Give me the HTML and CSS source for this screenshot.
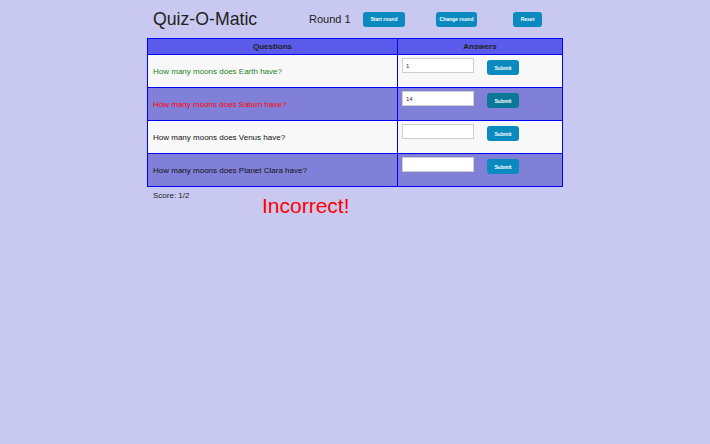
FILE: index.html
```html
<!DOCTYPE html>
<html>
<head>
<meta charset="utf-8">
<title>Quiz-O-Matic</title>
<link rel="stylesheet" href="styles.css">
</head>
<body>
<div class="app">
  <header class="topbar">
    <h1 class="title">Quiz-O-Matic</h1>
    <span class="round">Round 1</span>
    <button class="btn btn-start">Start round</button>
    <button class="btn btn-change">Change round</button>
    <button class="btn btn-reset">Reset</button>
  </header>
  <table class="quiz">
    <thead>
      <tr><th class="col-q">Questions</th><th class="col-a">Answers</th></tr>
    </thead>
    <tbody>
      <tr class="odd">
        <td class="q q-correct">How many moons does Earth have?</td>
        <td class="a"><input class="answer" type="text" value="1"><button class="btn submit">Submit</button></td>
      </tr>
      <tr class="even">
        <td class="q q-wrong">How many moons does Saturn have?</td>
        <td class="a"><input class="answer" type="text" value="14"><button class="btn submit active">Submit</button></td>
      </tr>
      <tr class="odd">
        <td class="q">How many moons does Venus have?</td>
        <td class="a"><input class="answer" type="text" value=""><button class="btn submit">Submit</button></td>
      </tr>
      <tr class="even">
        <td class="q">How many moons does Planet Clara have?</td>
        <td class="a"><input class="answer" type="text" value=""><button class="btn submit">Submit</button></td>
      </tr>
    </tbody>
  </table>
  <div class="footer">
    <span class="score">Score: 1/2</span>
    <span class="feedback">Incorrect!</span>
  </div>
</div>
</body>
</html>
```
FILE: styles.css
```css
html, body {
  margin: 0;
  padding: 0;
  background: #c9c8f0;
  font-family: "Liberation Sans", Arial, Helvetica, sans-serif;
  color: #222;
}
.app {
  width: 416px;
  margin: 0 auto;
}
.topbar {
  display: flex;
  align-items: center;
  height: 38px;
  padding-left: 6px;
}
.title {
  margin: 0;
  font-size: 17.7px;
  font-weight: normal;
  color: #222;
  width: 156px;
}
.round {
  font-size: 11px;
  color: #222;
  width: 54px;
}
.btn {
  font-family: "Liberation Sans", Arial, sans-serif;
  font-size: 5px;
  font-weight: bold;
  color: #fff;
  background: #0a8abf;
  border: none;
  border-radius: 3px;
  height: 15px;
  padding: 0;
  cursor: pointer;
}
.btn-start { width: 42px; margin-right: 31px; }
.btn-change { width: 41px; margin-right: 36px; }
.btn-reset { width: 29px; }
.quiz {
  width: 416px;
  border-collapse: collapse;
  border: 1px solid #0000ff;
  font-size: 8px;
}
.quiz th, .quiz td {
  border: 1px solid #0000ff;
}
.quiz thead tr {
  background: #5a5aeb;
  height: 16px;
}
.quiz th {
  font-weight: bold;
  color: #222;
  padding: 0;
}
.col-q { width: 249px; }
.quiz tbody tr { height: 33px; }
.odd { background: #f8f8f8; }
.even { background: #8080d8; }
.q {
  padding: 0 5px;
  color: #111;
}
.q-correct { color: #1f821f; }
.q-wrong { color: #ff0000; }
.a {
  vertical-align: top;
  padding: 3px 4px 0;
}
.answer {
  box-sizing: border-box;
  width: 72px;
  height: 15px;
  border: 1px solid #cfcfcf;
  background: #fff;
  font-family: "Liberation Sans", Arial, sans-serif;
  font-size: 6px;
  padding: 0 3px;
  margin: 0 13px 0 0;
  vertical-align: top;
  color: #333;
}
.submit {
  width: 32px;
  margin-top: 2px;
  vertical-align: top;
}
.submit.active { background: #0a7799; }
.footer {
  display: flex;
  align-items: flex-start;
  padding-left: 6px;
  padding-top: 4px;
}
.score {
  font-size: 8px;
  width: 109px;
}
.feedback {
  font-size: 21px;
  color: #ff0000;
  line-height: 24px;
  margin-top: 3px;
}
```
